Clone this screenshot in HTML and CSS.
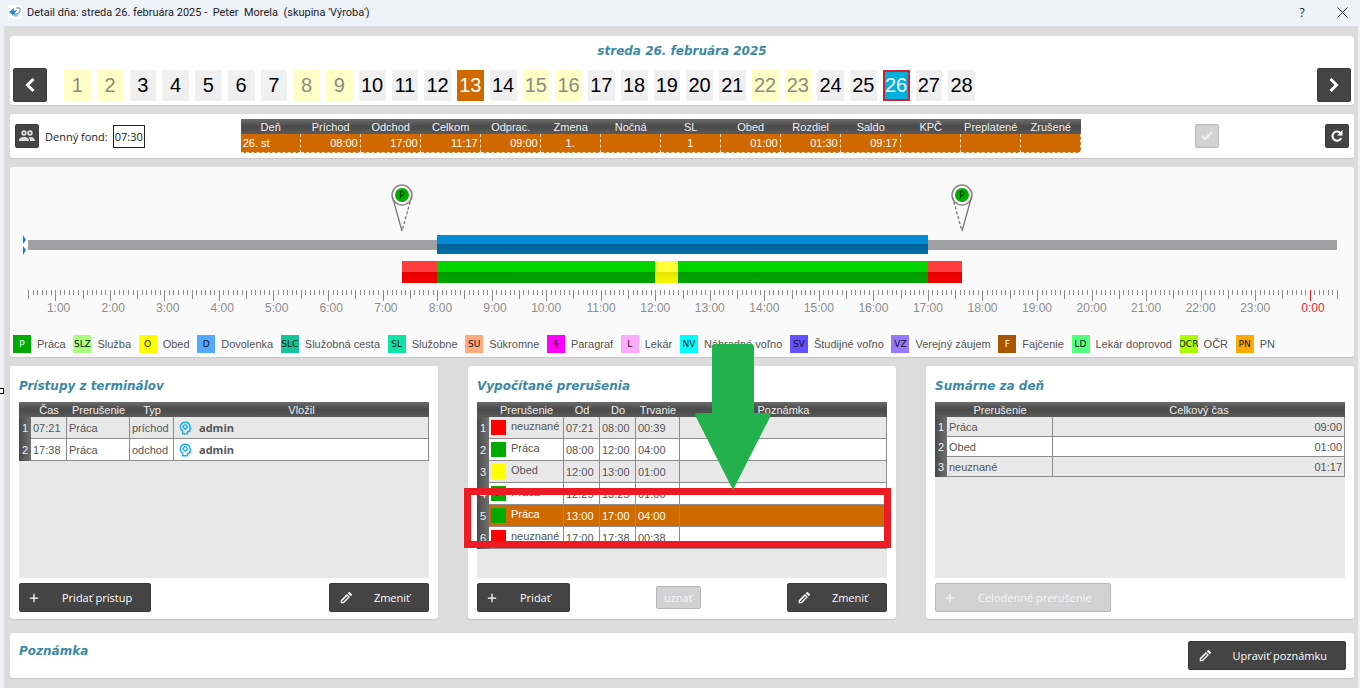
FILE: index.html
```html
<!DOCTYPE html>
<html lang="sk">
<head>
  <meta charset="UTF-8">
  <meta name="viewport" content="width=device-width, initial-scale=1.0">
  <title>Detail dňa</title>
  <link rel="stylesheet" href="styles.css">
</head>
<body>
  <!-- shared icons -->
  <svg class="sprite" width="0" height="0">
    <symbol id="icon-pencil" viewBox="0 0 24 24"><path fill="currentColor" fill-rule="evenodd" d="M3 21v-5.200L13.600 5.200l5.200 5.200L8.200 21zM15 3.800l1.700-1.700q1-.9 2 0l3.200 3.200q.9 1 0 2L20.200 9zM5.200 18.800h1.600l8.800-8.600-1.500-1.500-8.900 8.700z"/></symbol>
    <symbol id="icon-plus" viewBox="0 0 24 24"><path fill="none" stroke="currentColor" stroke-width="3" d="M12 2v20M2 12h20"/></symbol>
    <symbol id="icon-head" viewBox="0 0 24 24">
      <path fill="none" stroke="#1fb0ee" stroke-width="2.600" stroke-linejoin="round" d="M8 22v-4.500C5 15.500 4 13 4 10.200 4 5.500 8 2.300 12.300 2.300c4.600 0 7.700 3 8.200 7.200l1.500 3.800-1.800.9V18h-4v4z"/>
      <circle cx="12.500" cy="9.800" r="3.200" fill="none" stroke="#1fb0ee" stroke-width="2.400"/>
      <path stroke="#1fb0ee" stroke-width="2" d="M12.500 4.600v2M12.500 13v2M7.500 9.800h2M15.700 9.800h2"/>
    </symbol>
  </svg>

  <div class="window">
    <header class="titlebar">
      <svg class="app-icon" viewBox="0 0 14 14"><path fill="#fff" d="M0 0h14v14H0z"/><path fill="#2f8cc4" d="M1 7l5-4v3l3-1-2 3 2 2-3 1z"/><path fill="#8cc3e0" d="M4 10l4-2 3 1-3 3z"/><path fill="none" stroke="#6a8494" d="M8 3h4v4l-3 2"/></svg>
      <span class="caption">Detail dňa: streda 26. februára 2025 -&nbsp; Peter&nbsp; Morela&nbsp; (skupina 'Výroba')</span>
      <button class="win-btn" aria-label="Pomocník">?</button>
      <button class="win-btn" aria-label="Zavrieť"><svg width="11" height="11" viewBox="0 0 11 11"><path fill="none" stroke="#333" d="M.5.5l10 10M10.500.5l-10 10"/></svg></button>
    </header>

    <main class="content">
      <section class="panel calendar">
        <h2>streda 26. februára 2025</h2>
        <div class="calendar-row">
          <button class="btn nav" aria-label="Predchádzajúci deň"><svg width="12" height="16" viewBox="0 0 12 16"><path fill="none" stroke="#fff" stroke-width="3" d="M9.500 2L3.500 8l6 6"/></svg></button>
          <div class="days" id="days"></div>
          <button class="btn nav" aria-label="Nasledujúci deň"><svg width="12" height="16" viewBox="0 0 12 16"><path fill="none" stroke="#fff" stroke-width="3" d="M2.500 2l6 6-6 6"/></svg></button>
        </div>
      </section>

      <section class="panel summary">
        <button class="btn small" aria-label="Osoby"><svg width="16" height="14" viewBox="0 0 16 14"><g fill="#ddd"><circle cx="5" cy="4" r="2.700"/><circle cx="11" cy="4" r="2.700"/><path d="M0 12c0-3 2-4 5-4s5 1 5 4zM11 12c0-2-.5-3-1.500-4 4-.5 6.500 1 6.500 4z"/></g><circle cx="5" cy="4" r="1" fill="#464646"/><circle cx="11" cy="4" r="1" fill="#464646"/></svg></button>
        <label for="fond">Denný fond:</label>
        <input id="fond" class="fond" type="text" value="07:30">
        <table class="grid day-table">
          <thead>
            <tr><th>Deň</th><th>Príchod</th><th>Odchod</th><th>Celkom</th><th>Odprac.</th><th>Zmena</th><th>Nočná</th><th>SL</th><th>Obed</th><th>Rozdiel</th><th>Saldo</th><th>KPČ</th><th>Preplatené</th><th>Zrušené</th></tr>
          </thead>
          <tbody>
            <tr><td class="left">26. st</td><td>08:00</td><td>17:00</td><td>11:17</td><td>09:00</td><td class="center">1.</td><td></td><td class="center">1</td><td>01:00</td><td>01:30</td><td>09:17</td><td></td><td></td><td></td></tr>
          </tbody>
        </table>
        <div class="summary-actions">
          <button class="btn small" disabled aria-label="Potvrdiť"><svg width="12" height="10" viewBox="0 0 12 10"><path fill="none" stroke="#f2f2f2" stroke-width="2" d="M1 5l3 3 7-7"/></svg></button>
          <button class="btn small" aria-label="Obnoviť"><svg width="14" height="14" viewBox="0 0 14 14"><path fill="none" stroke="#fff" stroke-width="2" d="M11.200 9.200A4.600 4.600 0 1 1 10.500 4"/><path fill="#fff" d="M12.500 1v5.500H7z"/></svg></button>
        </div>
      </section>

      <section class="panel timeline">
        <div class="track-area" id="track">
          <svg class="edge-mark" viewBox="0 0 3 20"><path fill="#1c7fc0" d="M0 0l3 5-3 4zM0 11l3 4-3 5z"/></svg>
          <div class="baseline"></div>
        </div>
        <ul class="legend">
          <li><i class="tag work">P</i>Práca</li>
          <li><i class="tag slz">SLZ</i>Služba</li>
          <li><i class="tag lunch">O</i>Obed</li>
          <li><i class="tag vacation">D</i>Dovolenka</li>
          <li><i class="tag slc">SLC</i>Služobná cesta</li>
          <li><i class="tag sl">SL</i>Služobne</li>
          <li><i class="tag su">SU</i>Súkromne</li>
          <li><i class="tag par">§</i>Paragraf</li>
          <li><i class="tag doctor">L</i>Lekár</li>
          <li><i class="tag nv">NV</i>Náhradné voľno</li>
          <li><i class="tag sv">SV</i>Študijné voľno</li>
          <li><i class="tag vz">VZ</i>Verejný záujem</li>
          <li><i class="tag smoke">F</i>Fajčenie</li>
          <li><i class="tag ld">LD</i>Lekár doprovod</li>
          <li><i class="tag ocr">OCR</i>OČR</li>
          <li><i class="tag pn">PN</i>PN</li>
        </ul>
      </section>

      <div class="columns">
        <section class="panel card">
          <h2>Prístupy z terminálov</h2>
          <div class="table-box">
            <table class="grid">
              <colgroup><col class="c-idx"><col class="c-time"><col class="c-name"><col class="c-type"><col></colgroup>
              <thead>
                <tr><th></th><th>Čas</th><th>Prerušenie</th><th>Typ</th><th>Vložil</th></tr>
              </thead>
              <tbody>
                <tr><th>1</th><td>07:21</td><td>Práca</td><td>príchod</td><td class="user"><svg><use href="#icon-head"/></svg>admin</td></tr>
                <tr><th>2</th><td>17:38</td><td>Práca</td><td>odchod</td><td class="user"><svg><use href="#icon-head"/></svg>admin</td></tr>
              </tbody>
            </table>
          </div>
          <div class="actions">
            <button class="btn"><svg class="plus"><use href="#icon-plus"/></svg>Pridať prístup</button>
            <button class="btn"><svg class="pencil"><use href="#icon-pencil"/></svg>Zmeniť</button>
          </div>
        </section>

        <section class="panel card">
          <h2>Vypočítané prerušenia</h2>
          <div class="table-box">
            <table class="grid">
              <colgroup><col class="c-idx"><col class="c-break"><col class="c-time"><col class="c-time"><col class="c-type"><col></colgroup>
              <thead>
                <tr><th></th><th>Prerušenie</th><th>Od</th><th>Do</th><th>Trvanie</th><th>Poznámka</th></tr>
              </thead>
              <tbody>
                <tr><th>1</th><td><i class="mark error"></i>neuznané</td><td>07:21</td><td>08:00</td><td>00:39</td><td></td></tr>
                <tr><th>2</th><td><i class="mark work"></i>Práca</td><td>08:00</td><td>12:00</td><td>04:00</td><td></td></tr>
                <tr><th>3</th><td><i class="mark lunch"></i>Obed</td><td>12:00</td><td>13:00</td><td>01:00</td><td></td></tr>
                <tr><th>4</th><td><i class="mark work">P</i>Práca</td><td>12:25</td><td>13:25</td><td>01:00</td><td></td></tr>
                <tr class="selected"><th>5</th><td><i class="mark work"></i>Práca</td><td>13:00</td><td>17:00</td><td>04:00</td><td></td></tr>
                <tr><th>6</th><td><i class="mark error"></i>neuznané</td><td>17:00</td><td>17:38</td><td>00:38</td><td></td></tr>
              </tbody>
            </table>
          </div>
          <div class="actions">
            <button class="btn"><svg class="plus"><use href="#icon-plus"/></svg>Pridať</button>
            <button class="btn approve" disabled>uznať</button>
            <button class="btn"><svg class="pencil"><use href="#icon-pencil"/></svg>Zmeniť</button>
          </div>
          <div class="frame"></div>
          <svg class="arrow" viewBox="0 0 76 146"><path fill="#22b14c" d="M20 0h36q3 0 3 3v66h14q4 0 2 4L38 146 1 73q-2-4 2-4h14V3q0-3 3-3z"/></svg>
        </section>

        <section class="panel card">
          <h2>Sumárne za deň</h2>
          <div class="table-box">
            <table class="grid dense">
              <colgroup><col class="c-idx"><col class="c-sum"><col></colgroup>
              <thead>
                <tr><th></th><th>Prerušenie</th><th>Celkový čas</th></tr>
              </thead>
              <tbody>
                <tr><th>1</th><td>Práca</td><td class="right">09:00</td></tr>
                <tr><th>2</th><td>Obed</td><td class="right">01:00</td></tr>
                <tr><th>3</th><td>neuznané</td><td class="right">01:17</td></tr>
              </tbody>
            </table>
          </div>
          <div class="actions">
            <button class="btn" disabled><svg class="plus"><use href="#icon-plus"/></svg>Celodenné prerušenie</button>
          </div>
        </section>
      </div>

      <section class="panel note">
        <h2>Poznámka</h2>
        <button class="btn"><svg class="pencil"><use href="#icon-pencil"/></svg>Upraviť poznámku</button>
      </section>
    </main>
  </div>
  <span class="resize-handle"></span>

  <script>
    const weekend = [1, 2, 8, 9, 15, 16, 22, 23];
    const days = document.getElementById('days');
    for (let d = 1; d <= 28; d++) {
      const b = document.createElement('button');
      b.textContent = d;
      b.className = 'day';
      if (weekend.includes(d)) b.classList.add('weekend');
      if (d === 13) b.classList.add('today');
      if (d === 26) b.classList.add('current');
      days.appendChild(b);
    }

    // the axis runs from 0:30 to 0:30 of the next day
    const track = document.getElementById('track');
    const pct = h => (h - 0.5) / 24 * 100 + '%';

    function add(cls, from, to, text) {
      const el = document.createElement('div');
      el.className = cls;
      el.style.left = pct(from);
      if (to) el.style.width = (to - from) / 24 * 100 + '%';
      if (text) el.innerHTML = text;
      track.appendChild(el);
    }

    add('bar plan', 8, 17);
    add('bar seg error', 7 + 21 / 60, 8);
    add('bar seg work', 8, 12);
    add('bar seg lunch', 12, 12 + 25 / 60);
    add('bar seg work', 12 + 25 / 60, 17);
    add('bar seg error', 17, 17 + 38 / 60);

    for (let m = 30; m <= 1470; m += 5) {
      let cls = 'tick';
      if (m % 60 === 0) cls += ' hour';
      else if (m % 30 === 0) cls += ' half';
      if (m === 1440) cls += ' midnight';
      add(cls, m / 60);
    }
    for (let h = 1; h <= 24; h++) {
      add(h === 24 ? 'hour-label midnight' : 'hour-label', h, 0, (h % 24) + ':00');
    }

    function pin(dashLeft) {
      const left = dashLeft ? 'stroke-dasharray="3 2"' : '';
      const right = dashLeft ? '' : 'stroke-dasharray="3 2"';
      return '<svg width="24" height="50" viewBox="0 0 24 50"><circle cx="12" cy="12" r="10" fill="#fff" stroke="#8c8488" stroke-width="1.5"/>' +
        '<circle cx="12" cy="12" r="7" fill="#00aa00"/><path fill="none" stroke="#777" stroke-width="1.3" ' + left + ' d="M2.500 14L12 48"/>' +
        '<path fill="none" stroke="#777" stroke-width="1.3" ' + right + ' d="M21.500 14L12 48"/>' +
        '<text x="12" y="15" text-anchor="middle">P</text></svg>';
    }
    add('pin', 7 + 21 / 60, 0, pin(false));
    add('pin', 17 + 38 / 60, 0, pin(true));
  </script>
</body>
</html>
```

FILE: styles.css
```css
* {
  box-sizing: border-box;
}
body {
  margin: 0;
  min-height: 100vh;
  padding: 0 2px 0 4px;
  display: flex;
  background-color: #eef2f8;
  font-family: "Open Sans", "Noto Sans", sans-serif;
  font-size: 11px;
  color: #222;
}
.sprite {
  position: absolute;
}
.window {
  flex: 1;
  min-width: 0;
  background-color: #dcdcdc;
}
.titlebar {
  display: flex;
  align-items: center;
  height: 26px;
  padding: 0 6px 2px 4px;
  background-color: #eef3f9;
}
.app-icon {
  width: 14px;
  height: 14px;
  margin-right: 5px;
}
.caption {
  flex: 1;
  font-family: Roboto, sans-serif;
  white-space: pre;
}
.win-btn {
  width: 40px;
  height: 24px;
  padding: 0;
  border: none;
  background: none;
  font: inherit;
  font-size: 12px;
  color: #222;
}
.win-btn:last-child {
  width: 20px;
  margin-left: 10px;
}
.win-btn svg {
  display: block;
  margin: 0 auto;
}
.content {
  display: flex;
  flex-direction: column;
  gap: 9px;
  padding: 10px 4px 10px 6px;
}
.panel {
  background-color: #fff;
  border-radius: 3px;
  box-shadow: 0 1px 1px #c8c8c8;
}
h2 {
  margin: 0;
  font-family: "DejaVu Sans", Verdana, sans-serif;
  font-size: 12px;
  line-height: 20px;
  font-weight: bold;
  font-style: italic;
  color: #3c88a4;
}

/* buttons */
.btn {
  display: flex;
  align-items: center;
  justify-content: center;
  height: 29px;
  padding: 0 18px 0 9px;
  border: 1px solid #3a3a3a;
  border-radius: 2px;
  background-color: #444;
  color: #fff;
  font: inherit;
}
.btn:disabled {
  background-color: #d2d2d2;
  border-color: #b8b8b8;
  color: #f6f6f6;
}
.btn .plus {
  width: 10px;
  height: 10px;
  margin-right: 23px;
}
.btn .pencil {
  width: 14px;
  height: 14px;
  margin-right: 21px;
}
.btn.nav {
  width: 34px;
  height: 34px;
  padding: 0;
}
.btn.small {
  width: 24px;
  height: 24px;
  padding: 0;
}
.btn.approve {
  height: 23px;
  padding: 0 7px;
}

/* calendar */
.calendar {
  padding: 5px 3px 3px;
}
.calendar h2 {
  text-align: center;
}
.calendar-row {
  display: flex;
  align-items: center;
  justify-content: space-between;
  margin-top: 7px;
}
.days {
  display: grid;
  grid-template-columns: repeat(28, 1fr);
  gap: 6px;
  flex: 1;
  max-width: 911px;
  margin: 0 auto 0 17px;
}
.day {
  height: 31px;
  padding: 0;
  border: none;
  background-color: #f0f0f0;
  font: 20px "Liberation Sans", Arial, sans-serif;
  color: #000;
}
.day.weekend {
  background-color: #ffffc8;
  color: #8c8c80;
}
.day.today {
  background-color: #d06a00;
  color: #fff;
}
.day.current {
  border: 2px solid #d32030;
  background-color: #00b0dc;
  color: #fff;
}

/* summary of the day */
.summary {
  display: flex;
  align-items: center;
  height: 44px;
  padding: 0 5px;
}
.summary label {
  margin: 0 5px 0 6px;
}
.fond {
  width: 32px;
  height: 23px;
  padding: 0;
  border: 1px solid #222;
  background-color: #fff;
  font: inherit;
  color: #222;
  text-align: center;
}
.summary-actions {
  flex: 1;
  display: flex;
  justify-content: flex-end;
  gap: 106px;
}

/* tables */
.grid {
  width: 100%;
  table-layout: fixed;
  border-spacing: 0;
  font: 11px "Liberation Sans", Arial, sans-serif;
  color: #555;
}
.grid th {
  padding: 0;
  font-weight: normal;
  color: #f0f0f0;
  background: linear-gradient(#6c6c6c, #4a4a4a 50%, #5a5a5a);
}
.grid thead th {
  height: 15px;
}
.grid tbody th {
  background: linear-gradient(90deg, #4a4a4a, #707070);
}
.grid td {
  height: 22px;
  padding: 0 2px;
  border-right: 1px solid #8c8c8c;
  border-bottom: 1px solid #8c8c8c;
  background-color: #fff;
  white-space: nowrap;
  overflow: hidden;
}
.grid tbody tr:nth-child(odd) td {
  background-color: #e8e8e8;
}
.grid tbody tr.selected td {
  background-color: #d06a00;
  color: #fff;
}
.grid.dense td {
  height: 20px;
}
.grid .right {
  text-align: right;
}
.c-idx { width: 12px; }
.c-time { width: 36px; }
.c-name { width: 63px; }
.c-type { width: 44px; }
.c-break { width: 75px; }
.c-sum { width: 106px; }
.user {
  font-family: "Open Sans", "Noto Sans", sans-serif;
  font-weight: bold;
}
.user svg {
  width: 14px;
  height: 14px;
  margin: 0 7px 0 2px;
  vertical-align: -3px;
}
.mark {
  display: inline-block;
  width: 15px;
  height: 15px;
  margin-right: 5px;
  font: 9px/15px "DejaVu Sans", sans-serif;
  text-align: center;
  vertical-align: middle;
  color: #111;
}
.mark.error { background-color: #f00; }
.mark.work { background-color: #0a0; }
.mark.lunch { background-color: #ff0; }
.day-table {
  width: 840px;
  margin-left: 96px;
}
.day-table tbody tr:nth-child(odd) td {
  height: 19px;
  background-color: #d06a00;
  border-right: 1px dashed #f6dcc0;
  border-bottom: 1px dashed #f6dcc0;
  color: #fff;
  text-align: right;
}
.day-table tbody tr:nth-child(odd) .left {
  text-align: left;
}
.day-table tbody tr:nth-child(odd) .center {
  text-align: center;
}

/* timeline */
.timeline {
  background-color: #fafafa;
  padding: 0 0 4px;
}
.track-area {
  position: relative;
  height: 168px;
  margin: 0 17px 0 18px;
}
.baseline {
  position: absolute;
  top: 73px;
  width: 100%;
  height: 10px;
  background-color: #a0a0a2;
}
.edge-mark {
  position: absolute;
  left: -5px;
  top: 68px;
  width: 3px;
  height: 20px;
}
.bar {
  position: absolute;
  top: 94px;
  height: 22px;
}
.bar.plan {
  top: 68px;
  height: 19px;
  background: linear-gradient(#028cd6 48%, #00629a 48%, #0070aa);
}
.seg.error { background: linear-gradient(#ff3c3c 48%, #e80000 48%, #f40000); }
.seg.work { background: linear-gradient(#00d400 48%, #009a00 48%, #00a400); }
.seg.lunch { background: linear-gradient(#ffff38 48%, #e2e200 48%, #f8f800); }
.tick {
  position: absolute;
  top: 123px;
  width: 1px;
  height: 5px;
  background-color: #8a8a8a;
}
.tick.half { height: 9px; }
.tick.hour { height: 11px; }
.tick.midnight { background-color: #f02020; }
.hour-label {
  position: absolute;
  top: 133px;
  width: 30px;
  margin-left: -15px;
  font: 12px/16px "Liberation Sans", Arial, sans-serif;
  text-align: right;
  color: #8c8c8c;
}
.hour-label.midnight { color: #f02020; }
.pin {
  position: absolute;
  top: 16px;
  width: 24px;
  height: 50px;
  margin-left: -12px;
}
.pin text {
  font: 8px "DejaVu Sans", sans-serif;
}
.legend {
  display: flex;
  justify-content: space-between;
  margin: 0;
  padding: 0 79px 0 3px;
  list-style: none;
  font: 11px "Liberation Sans", Arial, sans-serif;
  color: #555;
  white-space: nowrap;
}
.legend li {
  display: flex;
  align-items: center;
}
.tag {
  width: 18px;
  height: 18px;
  margin-right: 6px;
  overflow: hidden;
  display: flex;
  justify-content: center;
  font: 9px/18px "DejaVu Sans", sans-serif;
  color: #111;
}
.tag.work { background-color: #0a0; color: #fff; }
.tag.slz { background-color: #aaff80; }
.tag.lunch { background-color: #ff0; }
.tag.vacation { background-color: #55aaff; }
.tag.slc { background-color: #14c49a; }
.tag.sl { background-color: #0be6a6; }
.tag.su { background-color: #ffaa7f; }
.tag.par { background-color: #f0f; }
.tag.doctor { background-color: #ffaaff; }
.tag.nv { background-color: #0ff; }
.tag.sv { background-color: #6450ff; }
.tag.vz { background-color: #9678ff; }
.tag.smoke { background-color: #aa5500; color: #fff; }
.tag.ld { background-color: #55ff7f; }
.tag.ocr { background-color: #aaff00; }
.tag.pn { background-color: #ffaa00; }

/* lower cards */
.columns {
  display: grid;
  grid-template-columns: repeat(3, 1fr);
  gap: 30px;
}
.card {
  position: relative;
  padding: 10px 9px 7px;
}
.table-box {
  height: 176px;
  margin-top: 6px;
  background-color: #e8e8e8;
}
.actions {
  display: flex;
  align-items: center;
  justify-content: space-between;
  margin-top: 5px;
}
.frame {
  position: absolute;
  left: -4px;
  right: 5px;
  top: 122px;
  height: 60px;
  border: 7px solid #ed1c24;
}
.arrow {
  position: absolute;
  left: 227px;
  top: -22px;
  width: 76px;
  height: 146px;
}
.note {
  display: flex;
  align-items: flex-start;
  justify-content: space-between;
  margin-top: 5px;
  padding: 8px 8px 8px 9px;
}
.resize-handle {
  position: absolute;
  left: -2px;
  top: 388px;
  width: 6px;
  height: 6px;
  border: 1px solid #000;
  background-color: #fff;
}
```
